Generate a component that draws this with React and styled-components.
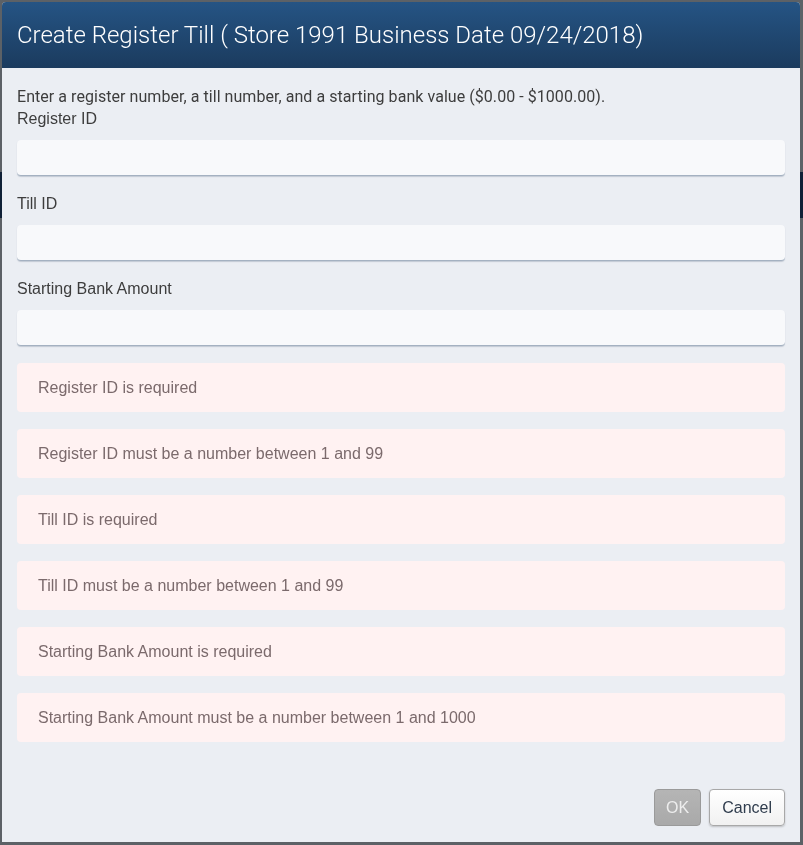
import React from 'react'
import styled, { createGlobalStyle } from 'styled-components'

const GlobalStyle = createGlobalStyle`
  html, body {
    margin: 0;
    padding: 0;
    background: #5c6166;
    overflow: hidden;
  }
  * { box-sizing: border-box; }
`

const PageBehind = styled.div`
  height: 845px;
  display: flex;
  flex-direction: column;
  background: #5c6166;
`

const DimmedNavbar = styled.div`
  margin-top: 172px;
  height: 46px;
  background: #0f2036;
`

const Modal = styled.div`
  position: fixed;
  top: 2px;
  left: 2px;
  width: 798px;
  height: 840px;
  display: flex;
  flex-direction: column;
  background: #ebeef3;
  border-radius: 4px 4px 0 0;
  overflow: hidden;
  font-family: 'Liberation Sans', Arial, sans-serif;
`

const Header = styled.div`
  height: 66px;
  flex-shrink: 0;
  display: flex;
  align-items: center;
  padding: 0 15px;
  background: linear-gradient(to bottom, #255484 0%, #1b3b5e 100%);
`

const Title = styled.h1`
  margin: 0;
  font-family: Roboto, 'Noto Sans', sans-serif;
  font-weight: 300;
  font-size: 24px;
  color: #ffffff;
`

const Body = styled.div`
  flex: 1;
  display: flex;
  flex-direction: column;
  padding: 18px 15px 0;
`

const Intro = styled.p`
  margin: 0;
  font-family: Roboto, 'Noto Sans', sans-serif;
  font-size: 16px;
  line-height: 22px;
  letter-spacing: 0.05px;
  color: #3d3d3d;
`

const Field = styled.div`
  display: flex;
  flex-direction: column;
  & + & {
    margin-top: 17px;
  }
`

const Label = styled.label`
  font-family: 'Liberation Sans', Arial, sans-serif;
  font-size: 16px;
  line-height: 22px;
  color: #3d3d3d;
`

const Input = styled.input`
  margin-top: 10px;
  height: 36px;
  width: 100%;
  border: none;
  border-bottom: 1px solid #a4b1c1;
  border-radius: 4px;
  background: #f8f9fb;
  box-shadow: 0 1px 1px rgba(120, 135, 155, 0.35);
  outline: none;
  padding: 0 10px;
  font-size: 16px;
`

const Alerts = styled.div`
  display: flex;
  flex-direction: column;
  gap: 17px;
  margin-top: 17px;
`

const Alert = styled.div`
  height: 49px;
  display: flex;
  align-items: center;
  padding: 0 21px;
  background: #fff2f2;
  border-radius: 4px;
  font-size: 16px;
  color: #7b6a6c;
`

const Footer = styled.div`
  margin-top: auto;
  display: flex;
  justify-content: flex-end;
  gap: 8px;
  padding: 0 15px 16px;
`

const Button = styled.button`
  height: 37px;
  padding: 0 ${p => (p.$primary ? '11px' : '12px')};
  border-radius: 4px;
  font-family: 'Liberation Sans', Arial, sans-serif;
  font-size: 16px;
  cursor: pointer;
  border: 1px solid ${p => (p.$primary ? '#9a9a9a' : '#a8a8a8')};
  color: ${p => (p.$primary ? '#ededed' : '#2f3c4d')};
  background: ${p =>
    p.$primary
      ? 'linear-gradient(to bottom, #b5b5b5, #a9a9a9)'
      : 'linear-gradient(to bottom, #ffffff, #f1f1f1)'};
  box-shadow: ${p => (p.$primary ? 'none' : '0 1px 2px rgba(0,0,0,0.2)')};
`

const messages = [
  'Register ID is required',
  'Register ID must be a number between 1 and 99',
  'Till ID is required',
  'Till ID must be a number between 1 and 99',
  'Starting Bank Amount is required',
  'Starting Bank Amount must be a number between 1 and 1000',
]

export default function App() {
  return (
    <>
      <GlobalStyle />
      <PageBehind>
        <DimmedNavbar />
      </PageBehind>
      <Modal>
        <Header>
          <Title>Create Register Till ( Store 1991 Business Date 09/24/2018)</Title>
        </Header>
        <Body>
          <Intro>Enter a register number, a till number, and a starting bank value ($0.00 - $1000.00).</Intro>
          <Field>
            <Label>Register ID</Label>
            <Input />
          </Field>
          <Field>
            <Label>Till ID</Label>
            <Input />
          </Field>
          <Field>
            <Label>Starting Bank Amount</Label>
            <Input />
          </Field>
          <Alerts>
            {messages.map(m => (
              <Alert key={m}>{m}</Alert>
            ))}
          </Alerts>
        </Body>
        <Footer>
          <Button $primary>OK</Button>
          <Button>Cancel</Button>
        </Footer>
      </Modal>
    </>
  )
}
